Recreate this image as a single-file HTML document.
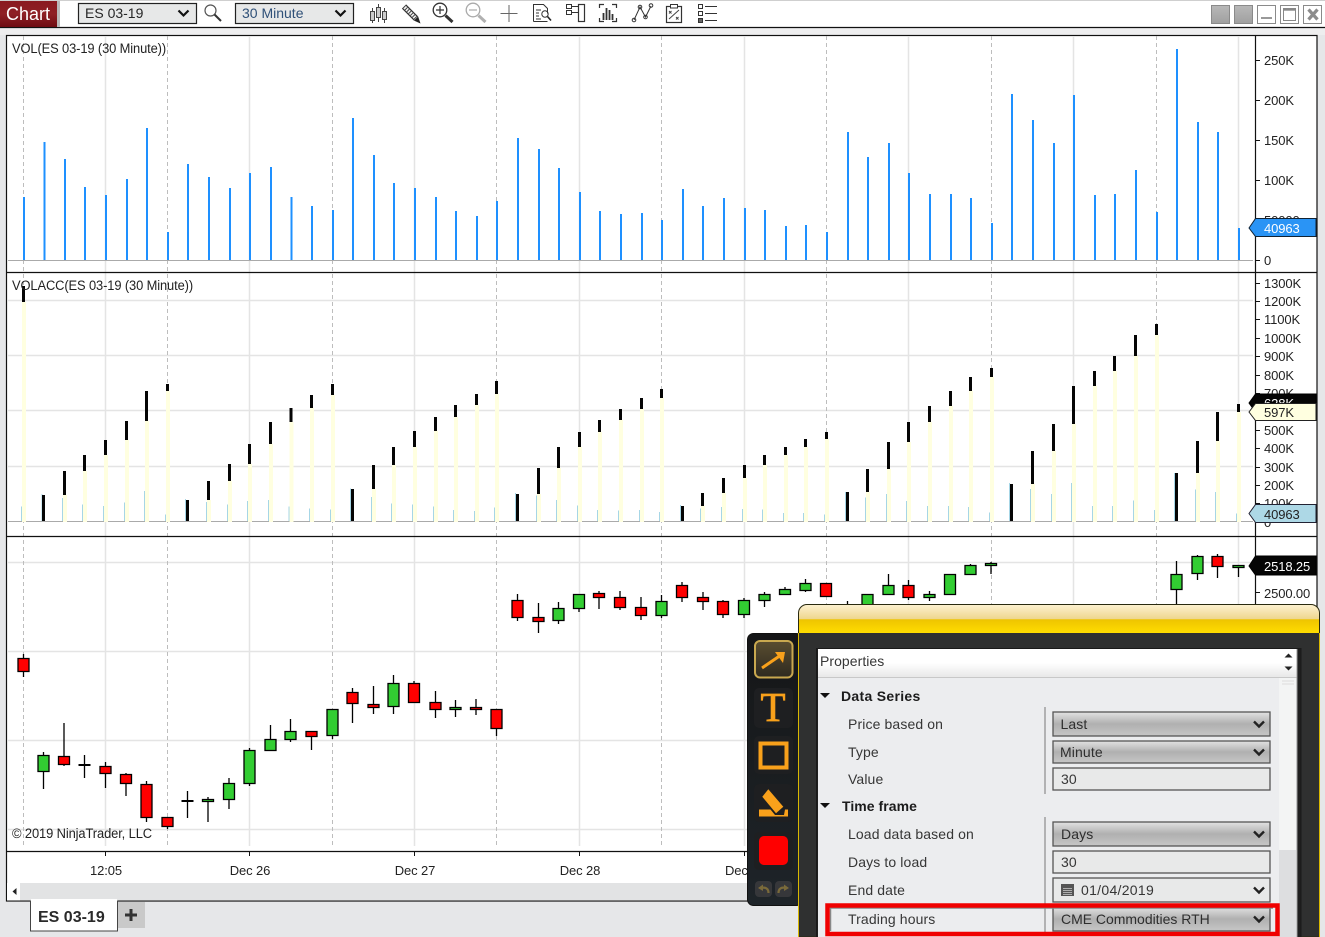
<!DOCTYPE html>
<html>
<head>
<meta charset="utf-8">
<title>Chart</title>
<style>
html,body{margin:0;padding:0;background:#e6e7e9;width:1325px;height:937px;overflow:hidden}
svg{display:block}
text{font-family:"Liberation Sans",Arial,sans-serif;fill:#222}
.ax{font-size:13px;letter-spacing:-.12px}
.lb{font-size:14px;fill:#363636;letter-spacing:.12px}
.bd{font-size:14px;font-weight:bold;fill:#1c1c1c;letter-spacing:.3px}
.gr{stroke:#e4e4e4;stroke-width:1.5;fill:none}
.ds{stroke:#bdbdbd;stroke-width:1;stroke-dasharray:4 3;fill:none}
.sel{fill:url(#gs);stroke:#555;stroke-width:1.3}
.inp{fill:#e8e9e9;stroke:#555;stroke-width:1.3}
.chv{fill:none;stroke:#222;stroke-width:2.4}
</style>
</head>
<body>
<svg width="1325" height="937" viewBox="0 0 1325 937" xmlns="http://www.w3.org/2000/svg">
<defs>
<linearGradient id="gr" x1="0" y1="0" x2="0" y2="1"><stop offset="0" stop-color="#8a1a20"/><stop offset=".5" stop-color="#8e2025"/><stop offset="1" stop-color="#6e0c12"/></linearGradient>
<linearGradient id="gb" x1="0" y1="0" x2="0" y2="1"><stop offset="0" stop-color="#b8b8b8"/><stop offset="1" stop-color="#a0a0a0"/></linearGradient>
<linearGradient id="gs" x1="0" y1="0" x2="0" y2="1"><stop offset="0" stop-color="#e2e2e2"/><stop offset=".5" stop-color="#b0b0b0"/><stop offset="1" stop-color="#c6c6c6"/></linearGradient>
<linearGradient id="gt" x1="0" y1="0" x2="0" y2="1"><stop offset="0" stop-color="#fdf1cf"/><stop offset=".5" stop-color="#eed68e"/><stop offset=".52" stop-color="#eec400"/><stop offset="1" stop-color="#ffdd00"/></linearGradient>
<linearGradient id="gh" x1="0" y1="0" x2="0" y2="1"><stop offset="0" stop-color="#ffffff"/><stop offset=".5" stop-color="#ffffff"/><stop offset="1" stop-color="#e8e8e8"/></linearGradient>
<linearGradient id="gd" x1="0" y1="0" x2="0" y2="1"><stop offset="0" stop-color="#151617"/><stop offset="1" stop-color="#1e2429"/></linearGradient>
<linearGradient id="ga" x1="0" y1="0" x2="0" y2="1"><stop offset="0" stop-color="#5a4d30"/><stop offset="1" stop-color="#2e2a20"/></linearGradient>
</defs>

<!-- background -->
<rect width="1325" height="937" fill="#e6e7e9"/>
<rect x="0" y="0" width="1325" height="27" fill="#fff"/>
<rect x="0" y="0" width="1325" height="1" fill="#cfcfcf"/>
<rect x="0" y="28" width="1325" height="7" fill="#eeeeef"/>
<path d="M0 27.5H1325" stroke="#111" stroke-width="1.3"/>

<!-- chart tab -->
<rect x="57" y="1" width="3" height="26" fill="#b9b9b9"/>
<rect x="0" y="1" width="57" height="26" fill="url(#gr)"/>
<text x="6" y="20" style="font-size:18px;fill:#fff">Chart</text>

<!-- selects -->
<rect x="78.5" y="3.5" width="118" height="20" fill="#e7e8e8" stroke="#222" stroke-width="1.2"/>
<text x="85" y="18" style="font-size:14px;fill:#262626">ES 03-19</text>
<path d="M178.500 10.500l5 5 5-5" class="chv" style="stroke:#111;stroke-width:2.2"/>
<rect x="235.5" y="3.5" width="118" height="20" fill="#e7e8e8" stroke="#222" stroke-width="1.2"/>
<text x="242" y="18" style="font-size:14px;fill:#2f5078">30 Minute</text>
<path d="M335.500 10.500l5 5 5-5" class="chv" style="stroke:#111;stroke-width:2.2"/>

<!-- toolbar icons -->
<g fill="none" stroke="#555">
<circle cx="210.5" cy="10.5" r="5.5" stroke-width="1.2"/>
<path d="M214.500 14.500l6.500 6.500" stroke="#333" stroke-width="2"/>
<!-- candles -->
<g stroke="#444" stroke-width="1"><path d="M372.500 8V23M378.500 4V22M384.500 8V23"/><rect x="370.5" y="11.5" width="4" height="9" fill="#ccc"/><rect x="376.5" y="7.5" width="4" height="10" fill="#ccc"/><rect x="382.5" y="11.5" width="4" height="8" fill="#ccc"/></g>
<!-- pencil -->
<path d="M404 6.500L416 18.500" stroke="#333" stroke-width="6"/>
<path d="M404 6.500L416 18.500" stroke="#f2f2f2" stroke-width="3.6"/>
<path d="M404 6.500L416 18.500" stroke="#444" stroke-width="3.6" stroke-dasharray="1 1.600"/>
<path d="M414.500 20.500L420 23L418 17Z" fill="#222" stroke="#222" stroke-width=".6"/>
<!-- zoom in -->
<circle cx="440" cy="10" r="6.800" stroke="#333" stroke-width="1.3"/>
<path d="M436 10h8M440 6v8" stroke="#333" stroke-width="1.2"/>
<path d="M445.500 15.500l7 6.500" stroke="#333" stroke-width="3"/>
<!-- zoom out -->
<circle cx="473" cy="10" r="6.800" stroke="#aaa" stroke-width="1.3"/>
<path d="M469 10h8" stroke="#aaa" stroke-width="1.2"/>
<path d="M478.500 15.500l7 6.500" stroke="#b0b0b0" stroke-width="3"/>
<!-- cross -->
<path d="M500.500 13.500h17M509 5v17" stroke="#666" stroke-width="1"/>
<!-- doc search -->
<path d="M533.500 21.500V4.500h10l4 4v5M533.500 21.500h14" stroke="#333" stroke-width="1"/>
<path d="M536 10h5M536 13h3M536 16h3M536 19h5" stroke="#333" stroke-width="1"/>
<circle cx="545" cy="14" r="3.200" stroke="#333" stroke-width="1"/>
<path d="M547.500 16.500l3.500 4" stroke="#222" stroke-width="1.6"/>
<!-- panel -->
<rect x="566.5" y="4.5" width="5" height="4" stroke="#333"/>
<rect x="566.5" y="10.5" width="5" height="4" stroke="#333"/>
<path d="M572 6.500h6M572 12.500h6" stroke="#333"/>
<rect x="578.5" y="4.5" width="6" height="17" stroke="#333" stroke-width="1.2"/>
<!-- bars in brackets -->
<path d="M604 4.500h-4.500V8M612 4.500h4.500V8M604 21.500h-4.500V18M612 21.500h4.500V18" stroke="#333" stroke-width="1.2"/>
<path d="M603.500 20V13M606.500 20V8M609.500 20V10M612.500 20V14" stroke="#333" stroke-width="1.8"/>
<!-- line nodes -->
<path d="M634 20L640 7L645.500 17L651 6" stroke="#333" stroke-width="1"/>
<circle cx="634" cy="20" r="1.8" stroke="#333"/><circle cx="640" cy="7" r="1.8" stroke="#333"/><circle cx="645.5" cy="17" r="1.8" stroke="#333"/><circle cx="651" cy="5.5" r="1.8" stroke="#333"/>
<!-- clipboard -->
<rect x="666.5" y="6.5" width="15" height="16" stroke="#333" stroke-width="1.2"/>
<rect x="670.5" y="4.5" width="7" height="3.5" fill="#fff" stroke="#333"/>
<path d="M669 19L679 10M669 11l2.500 2.500M671.500 11L669 13.500M676 17l2.500 2.500M678.500 17L676 19.500" stroke="#444"/>
<!-- list -->
<rect x="698.5" y="4.5" width="4" height="4" stroke="#333"/><rect x="698.5" y="11.5" width="4" height="4" stroke="#333"/><rect x="698.5" y="18.5" width="4" height="4" fill="#666" stroke="#333"/>
<path d="M705 6.500h12M705 13.500h12M705 20.500h12" stroke="#333" stroke-width="1.1"/>
</g>

<!-- window buttons -->
<rect x="1211.5" y="5.5" width="18" height="18" fill="url(#gb)" stroke="#8a8a8a"/>
<rect x="1234.5" y="5.5" width="18" height="18" fill="url(#gb)" stroke="#8a8a8a"/>
<rect x="1257.5" y="5.5" width="18" height="18" fill="#fff" stroke="#8a8a8a"/>
<path d="M1261 18h11" stroke="#999" stroke-width="2"/>
<rect x="1280.5" y="5.5" width="18" height="18" fill="#fff" stroke="#8a8a8a"/>
<rect x="1283.5" y="8.5" width="12" height="12" fill="#fff" stroke="#888"/><path d="M1283.500 9.500h12" stroke="#888" stroke-width="2.4"/>
<rect x="1303.5" y="5.5" width="18" height="18" fill="#fff" stroke="#8a8a8a"/>
<path d="M1308.500 9.500l9 10M1317.500 9.500l-9 10" stroke="#8c8c8c" stroke-width="3.2"/>

<!-- chart box -->
<rect x="6.5" y="35.5" width="1310.5" height="865.5" fill="#fff" stroke="#111" stroke-width="1.2"/>

<!-- horizontal grid -->
<path class="gr" d="M8 300.500H1253M8 355.500H1253M8 410.500H1253M8 466.500H1253"/>
<path class="gr" d="M8 562.500H1253M8 651.500H1253M8 740.500H1253M8 829.500H1253"/>
<!-- vertical grid -->
<path class="gr" d="M105.500 36V846M249.500 36V846M414.500 36V846M579.500 36V846M744.500 36V846M908.500 36V846M1073.500 36V846M1238.500 36V846"/>
<path class="ds" d="M23.500 36V846M167.500 36V846M332.500 36V846M496.500 36V846M661.500 36V846M826.500 36V846M991.500 36V846M1156.500 36V846"/>

<!-- baselines -->
<path d="M8 260.500H1253M8 521.500H1253" stroke="#aaa" stroke-width="1"/>

<!-- volume -->
<path fill="none" stroke="#1e90ff" stroke-width="2" shape-rendering="crispEdges" transform="translate(.5 0)" d="M23.500 197V260M44 142V260M64.500 159V260M84.500 187V260M105.500 195V260M126.500 179V260M146.500 128V260M167.500 232V260M187.500 164V260M208.500 177V260M229.500 188V260M249.500 173V260M270.500 167V260M291 197V260M311.500 206V260M332.500 210V260M352.500 118V260M373.500 155V260M393.500 183V260M414.500 188V260M435.500 197V260M455.500 211V260M476.500 216V260M496.500 201V260M517.500 138V260M538.500 149V260M558.500 168V260M579.500 192V260M599.500 211V260M620.500 214V260M641.500 213V260M661.500 220V260M682.500 189V260M702.500 206V260M723.500 198V260M744.500 208V260M764.500 210V260M785.500 226V260M805.500 225V260M826.500 232V260M847.500 132V260M867.500 157V260M888.500 143V260M908.500 173V260M929.500 194V260M950.500 194V260M970.500 198V260M991.500 223V260M1011.500 94V260M1032.500 120V260M1053.500 143V260M1073.500 95V260M1094.500 195V260M1114.500 194V260M1135.500 170V260M1156.500 212V260M1176.500 49V260M1197.500 122V260M1217.500 132V260M1238.500 228V260"/>

<!-- volacc light blue -->
<path fill="none" stroke="#a6d6e6" stroke-width="1.3" shape-rendering="crispEdges" transform="translate(.3 0)" d="M21.200 506.600V521M41.700 494V521M62.200 498V521M82.200 504.300V521M103.200 506V521M124.200 502.500V521M144.200 491V521M165.200 514.600V521M185.200 499V521M206.200 502V521M227.200 504.500V521M247.200 501V521M268.200 500V521M288.700 506.600V521M309.200 508.600V521M330.200 509.500V521M350.200 488.500V521M371.200 497V521M391.200 503.400V521M412.200 504.500V521M433.200 506.600V521M453.200 510V521M474.200 511V521M494.200 507.500V521M515.200 493V521M536.200 495.600V521M556.200 500V521M577.200 505.400V521M597.200 510V521M618.200 510.500V521M639.200 510V521M659.200 512V521M680.200 505V521M700.200 508.600V521M721.200 507V521M742.200 509V521M762.200 509.500V521M783.200 513V521M803.200 513V521M824.200 514.600V521M845.200 492V521M865.200 497.400V521M886.200 494V521M906.200 501V521M927.200 506V521M948.200 506V521M968.200 507V521M989.200 512.500V521M1009.200 483V521M1030.200 489V521M1051.200 494V521M1071.200 483V521M1092.200 506V521M1112.200 506V521M1133.200 500.400V521M1154.200 510V521M1174.200 473V521M1195.200 489.400V521M1215.200 492V521M1236.200 513.700V521"/>
<!-- volacc yellow -->
<path fill="none" stroke="#ffffe0" stroke-width="4" shape-rendering="crispEdges" transform="translate(.5 0)" d="M23.500 302V522M64.500 495V522M84.500 471V522M105.500 455V522M126.500 440V522M146.500 421V522M167.500 391V522M208.500 500V522M229.500 481V522M249.500 464V522M270.500 444V522M291 422V522M311.500 408V522M332.500 395V522M373.500 489V522M393.500 465V522M414.500 447V522M435.500 431V522M455.500 417V522M476.500 405V522M496.500 394V522M538.500 494V522M558.500 468V522M579.500 447V522M599.500 432V522M620.500 420V522M641.500 409V522M661.500 398V522M702.500 506V522M723.500 493V522M744.500 478V522M764.500 465V522M785.500 455V522M805.500 447V522M826.500 439V522M867.500 492V522M888.500 469V522M908.500 442V522M929.500 422V522M950.500 406V522M970.500 391V522M991.500 377V522M1032.500 484V522M1053.500 451V522M1073.500 424V522M1094.500 386V522M1114.500 371V522M1135.500 356V522M1156.500 335V522M1197.500 473V522M1217.500 441V522M1238.500 412V522"/>
<!-- volacc black -->
<path fill="none" stroke="#050505" stroke-width="3" shape-rendering="crispEdges" d="M23.500 286V302M43.500 495V521M64.500 471V495M84.500 455V471M105.500 440V455M126.500 421V440M146.500 391V421M167.500 384V391M187.500 500V521M208.500 481V500M229.500 464V481M249.500 444V464M270.500 422V444M291 408V422M311.500 395V408M332.500 384V395M352.500 489V521M373.500 465V489M393.500 447V465M414.500 431V447M435.500 417V431M455.500 405V417M476.500 394V405M496.500 381V394M517.500 494V521M538.500 468V494M558.500 447V468M579.500 432V447M599.500 420V432M620.500 409V420M641.500 398V409M661.500 389V398M682.500 506V521M702.500 493V506M723.500 478V493M744.500 465V478M764.500 455V465M785.500 447V455M805.500 439V447M826.500 432V439M847.500 492V521M867.500 469V492M888.500 442V469M908.500 422V442M929.500 406V422M950.500 391V406M970.500 377V391M991.500 368V377M1011.500 484V521M1032.500 451V484M1053.500 424V451M1073.500 386V424M1094.500 371V386M1114.500 356V371M1135.500 335V356M1156.500 324V335M1176.500 473V521M1197.500 441V473M1217.500 412V441M1238.500 404V412"/>

<!-- panel separators -->
<path d="M7 272.500H1317M7 536.500H1317M7 851.500H1255" stroke="#111" stroke-width="1.2" fill="none"/>
<path d="M1255.500 36V851" stroke="#111" stroke-width="1.2"/>

<!-- wicks -->
<path fill="none" stroke="#000" stroke-width="1.3" d="M23.500 654V677M43.500 752V789M64 723V766M84.500 755V778M105.500 762V788M126 773V796M146.500 781V822M167.500 817V829M187.500 791V818M208 797V822M229 778V809M249.500 748V786M270.500 725V751M290.500 719V742M311.500 731V750M332.500 709V739M352.500 688V723M373.500 686V714M393.500 675V714M414 681V703M435.500 691V718M455.500 700V717M476 699V715M496.500 709V736M517.500 594V621M538.500 603V633M558.500 602V624M579 594V612M599 591V609M620 591V610M641 597V620M661.500 595V618M682 582V602M703 592V610M723 600V618M744 598V618M764.500 592V607M785 587V595M805.500 579V592M847.500 601V612M888.500 574V595M908.500 580V600M929.500 591V601M970.500 564V575M991 562V574M1176.500 561V610M1197.500 555V580M1217.500 554V578M1238.500 565V577"/>
<!-- dojis -->
<path fill="none" stroke="#000" stroke-width="2" d="M78.500 765H90.500M181.500 801H193.500"/>
<!-- red candles -->
<path fill="#ff0000" stroke="#000" stroke-width="1.3" d="M18 658.500h11V671.500h-11zM58.500 756.500h11V764.500h-11zM100 766.500h11V773.500h-11zM120.500 774.500h11V783.500h-11zM141 784.500h11V817.500h-11zM162 817.500h11V826.500h-11zM306 731.500h11V736.500h-11zM347 692.500h11V703.500h-11zM368 704.500h11V707.500h-11zM408.500 683.500h11V702.500h-11zM430 702.500h11V709.500h-11zM470.500 707.500h11V709.500h-11zM491 709.500h11V728.500h-11zM512 600.500h11V617.500h-11zM533 617.500h11V621.500h-11zM593.500 593.500h11V597.500h-11zM614.500 597.500h11V607.500h-11zM635.500 607.500h11V615.500h-11zM676.500 585.500h11V597.500h-11zM697.500 597.500h11V601.500h-11zM717.500 601.500h11V614.500h-11zM820.500 583.500h11V596.500h-11zM903 585.500h11V597.500h-11zM1212 556.500h11V566.500h-11z"/>
<!-- green candles -->
<path fill="#32cd32" stroke="#000" stroke-width="1.3" d="M38 755.500h11V771.500h-11zM202.500 799.500h11V801.500h-11zM223.500 783.500h11V799.500h-11zM244 750.500h11V783.500h-11zM265 739.500h11V750.500h-11zM285 731.500h11V739.500h-11zM327 709.500h11V735.500h-11zM388 683.500h11V706.500h-11zM450 707.500h11V709.500h-11zM553 608.500h11V620.500h-11zM573.500 594.500h11V608.500h-11zM656 601.500h11V615.500h-11zM738.500 600.500h11V614.500h-11zM759 594.500h11V600.500h-11zM779.500 589.500h11V594.500h-11zM800 583.500h11V590.500h-11zM862 594.500h11V610h-11zM883 585.500h11V594.500h-11zM924 594.500h11V597.500h-11zM944.500 574.500h11V594.500h-11zM965 565.500h11V574.500h-11zM985.500 563.500h11V565.500h-11zM1171 574.500h11V589.500h-11zM1192 556.500h11V573.500h-11zM1233 565.500h11V567.500h-11z"/>

<!-- y axis ticks -->
<path stroke="#111" stroke-width="1" d="M1255 60.500h5M1255 100.500h5M1255 140.500h5M1255 180.500h5M1255 220.500h5M1255 260.500h5M1255 283.500h5M1255 301.500h5M1255 319.500h5M1255 338.500h5M1255 356.500h5M1255 375.500h5M1255 393.500h5M1255 430.500h5M1255 448.500h5M1255 467.500h5M1255 485.500h5M1255 503.500h5M1255 522.500h5M1255 592.500h5"/>

<!-- labels -->
<text x="12" y="53" class="ax" textLength="154" lengthAdjust="spacingAndGlyphs" style="font-size:13.5px">VOL(ES 03-19 (30 Minute))</text>
<text x="12" y="290" class="ax" textLength="181" lengthAdjust="spacingAndGlyphs" style="font-size:13.5px">VOLACC(ES 03-19 (30 Minute))</text>
<text x="12" y="838" class="ax" textLength="140" lengthAdjust="spacingAndGlyphs" style="font-size:13.5px">© 2019 NinjaTrader, LLC</text>

<text x="1264" y="65" class="ax">250K</text>
<text x="1264" y="105" class="ax">200K</text>
<text x="1264" y="145" class="ax">150K</text>
<text x="1264" y="185" class="ax">100K</text>
<text x="1264" y="225" class="ax">50000</text>
<text x="1264" y="265" class="ax">0</text>
<text x="1264" y="288" class="ax">1300K</text>
<text x="1264" y="306" class="ax">1200K</text>
<text x="1264" y="324" class="ax">1100K</text>
<text x="1264" y="343" class="ax">1000K</text>
<text x="1264" y="361" class="ax">900K</text>
<text x="1264" y="380" class="ax">800K</text>
<text x="1264" y="398" class="ax">700K</text>
<text x="1264" y="435" class="ax">500K</text>
<text x="1264" y="453" class="ax">400K</text>
<text x="1264" y="472" class="ax">300K</text>
<text x="1264" y="490" class="ax">200K</text>
<text x="1264" y="508" class="ax">100K</text>
<text x="1264" y="527" class="ax">0</text>
<text x="1264" y="598" class="ax">2500.00</text>

<!-- markers -->
<path d="M1249 228L1255.500 218.500H1316V236.500H1255.500Z" fill="#2a94f5" stroke="#123" stroke-width="1"/>
<text x="1264" y="233" class="ax" style="fill:#fff">40963</text>
<path d="M1249 403L1255.500 394H1316V412H1255.500Z" fill="#050505" stroke="#000"/>
<text x="1264" y="408" class="ax" style="fill:#fff">628K</text>
<path d="M1249 412L1255.500 403.500H1316V420.500H1255.500Z" fill="#ffffe0" stroke="#222" stroke-width="1"/>
<text x="1264" y="417" class="ax">597K</text>
<path d="M1249 513.500L1255.500 504.500H1316V522.500H1255.500Z" fill="#add8e6" stroke="#223" stroke-width="1"/>
<text x="1264" y="519" class="ax">40963</text>
<path d="M1249 566L1255.500 556H1316V575H1255.500Z" fill="#050505" stroke="#000"/>
<text x="1264" y="571" class="ax" style="fill:#fff">2518.25</text>

<!-- x axis -->
<path stroke="#111" stroke-width="1" d="M105.500 851v5M249.500 851v5M414.500 851v5M579.500 851v5M744.500 851v5"/>
<text x="106" y="875" class="ax" text-anchor="middle">12:05</text>
<text x="250" y="875" class="ax" text-anchor="middle">Dec 26</text>
<text x="415" y="875" class="ax" text-anchor="middle">Dec 27</text>
<text x="580" y="875" class="ax" text-anchor="middle">Dec 28</text>
<text x="725" y="875" class="ax">Dec 31</text>

<!-- scrollbar -->
<rect x="7" y="883" width="1309" height="17.5" fill="#e2e3e4"/>
<rect x="7" y="883" width="13" height="17.5" fill="#fff"/>
<path d="M16.500 888v7l-4-3.500z" fill="#222"/>

<!-- tabs -->
<rect x="30.5" y="901" width="87" height="30" fill="#fff" stroke="#444" stroke-width="1"/>
<rect x="31" y="899" width="86" height="3" fill="#fff"/>
<text x="38" y="922" style="font-size:16px;font-weight:bold;fill:#2a2a2a">ES 03-19</text>
<rect x="118" y="902" width="27" height="26" fill="#c9c9c9"/>
<path d="M125 915h12M131 909v12" stroke="#333" stroke-width="3"/>

<!-- drawing toolbar -->
<rect x="747.5" y="633.5" width="55" height="272" rx="6" fill="url(#gd)" stroke="#111"/>
<rect x="755" y="641" width="37.5" height="36.5" rx="5" fill="url(#ga)" stroke="#c9a84f" stroke-width="2"/>
<path d="M762 668L781 655" stroke="#f9a11b" stroke-width="3"/>
<path d="M775 652L785 652L783 663Z" fill="#f9a11b"/>
<rect x="754" y="688" width="39" height="40" rx="5" fill="#1e1f21"/>
<text x="773" y="721" text-anchor="middle" style="font-family:'Liberation Serif',serif;font-size:41px;fill:#f9a11b;stroke:#f9a11b;stroke-width:.7">T</text>
<rect x="754" y="736" width="39" height="38" rx="5" fill="#1e1f21"/>
<rect x="760.5" y="743.5" width="26" height="24" fill="none" stroke="#f9a11b" stroke-width="4"/>
<rect x="754" y="784" width="39" height="38" rx="5" fill="#1e1f21"/>
<path d="M762.300 796.700L768.300 789.300L783.300 806.700L776 813.300Z" fill="#f9a11b"/>
<path d="M759 809.500H770.500L775 815H784L785 809.500H788V816.500H759Z" fill="#f9a11b"/>
<rect x="754" y="832" width="39" height="38" rx="5" fill="#1e1f21"/>
<rect x="759" y="836" width="29" height="29" rx="5" fill="#ff0000"/>
<rect x="755" y="881" width="17" height="16" rx="4" fill="#36373a"/>
<rect x="775" y="881" width="17" height="16" rx="4" fill="#36373a"/>
<path d="M768.500 893c0-5-3.500-6-8-5" fill="none" stroke="#7a6a3a" stroke-width="2.2"/>
<path d="M763 884.500l-5 3.500 5 3z" fill="#7a6a3a"/>
<path d="M778.500 893c0-5 3.500-6 8-5" fill="none" stroke="#7a6a3a" stroke-width="2.2"/>
<path d="M784 884.500l5 3.500-5 3z" fill="#7a6a3a"/>

<!-- dialog -->
<path d="M798.500 937V613a8.500 8.500 0 0 1 8.500-8.500H1311a8.500 8.500 0 0 1 8.500 8.500V937Z" fill="#2f3030" stroke="#2a2a10" stroke-width="1"/>
<path d="M799 633V613a8 8 0 0 1 8-8H1311a8 8 0 0 1 8 8V633Z" fill="url(#gt)"/>
<path d="M798.500 633V937M1319.500 633V937" stroke="#d9b800" stroke-width="1"/>
<!-- panel -->
<rect x="816.5" y="648.5" width="484.5" height="290" fill="#1f1f1f" stroke="#1a1a1a"/>
<rect x="818" y="649" width="479" height="288" fill="#ecedef"/>
<rect x="818" y="649" width="479" height="28" fill="url(#gh)"/>
<path d="M818 677.500H1297" stroke="#c8c8c8"/>
<path d="M1297 649V937" stroke="#999" stroke-width="1"/>
<text x="820" y="666" class="lb" style="letter-spacing:.05px">Properties</text>
<path d="M1284.500 657.500l4-4 4 4zM1284.500 666.500h8l-4 4z" fill="#222"/>
<!-- scroll track -->
<rect x="1279" y="678" width="17" height="172" fill="#f3f4f4"/>
<rect x="1279" y="850" width="17" height="87" fill="#dddee0"/>
<path d="M1282 681h12M1282 684h12" stroke="#ddd"/>

<!-- rows -->
<path d="M820 693h10l-5 5z" fill="#111"/>
<text x="841" y="701" class="bd">Data Series</text>
<text x="848" y="729" class="lb">Price based on</text>
<text x="848" y="757" class="lb">Type</text>
<text x="848" y="784" class="lb">Value</text>
<path d="M820 803h10l-5 5z" fill="#111"/>
<text x="842" y="811" class="bd" style="letter-spacing:.05px">Time frame</text>
<text x="848" y="839" class="lb">Load data based on</text>
<text x="848" y="867" class="lb">Days to load</text>
<text x="848" y="895" class="lb">End date</text>
<text x="848" y="924" class="lb">Trading hours</text>

<path d="M1045 707V794M1045 817V933" stroke="#777" stroke-width="1"/>

<rect x="1053" y="712" width="217" height="24" class="sel"/>
<text x="1060.5" y="729" class="lb" style="fill:#2e2e2e">Last</text>
<path d="M1254 721.500l5 5 5-5" class="chv"/>
<rect x="1053" y="741" width="217" height="22" class="sel"/>
<text x="1060" y="757" class="lb" style="fill:#2e2e2e">Minute</text>
<path d="M1254 749.500l5 5 5-5" class="chv"/>
<rect x="1053" y="768" width="217" height="22" class="inp"/>
<text x="1061" y="784" class="lb">30</text>
<rect x="1053" y="822" width="217" height="24" class="sel"/>
<text x="1061" y="839" class="lb" style="fill:#2e2e2e">Days</text>
<path d="M1254 831.500l5 5 5-5" class="chv"/>
<rect x="1053" y="851" width="217" height="22" class="inp"/>
<text x="1061" y="867" class="lb">30</text>
<rect x="1053" y="878" width="217" height="24" class="inp"/>
<rect x="1061" y="884" width="13" height="12" fill="#555"/>
<path d="M1063 888.500h9M1063 890.500h9M1063 892.500h9M1063 894.500h9" stroke="#ccc" stroke-width=".7"/>
<text x="1081" y="895" class="lb" style="letter-spacing:.3px">01/04/2019</text>
<path d="M1254 887.500l5 5 5-5" class="chv"/>
<rect x="1053" y="907" width="217" height="24" class="sel"/>
<text x="1061" y="924" class="lb" style="letter-spacing:-.02px;fill:#2e2e2e">CME Commodities RTH</text>
<path d="M1254 916.500l5 5 5-5" class="chv"/>

<!-- red highlight -->
<path d="M830.500 931V908H1273" fill="none" stroke="#888" stroke-width="1.5"/>
<rect x="827.5" y="905.5" width="450" height="28.5" fill="none" stroke="#f00000" stroke-width="4.5"/>
</svg>
</body>
</html>
